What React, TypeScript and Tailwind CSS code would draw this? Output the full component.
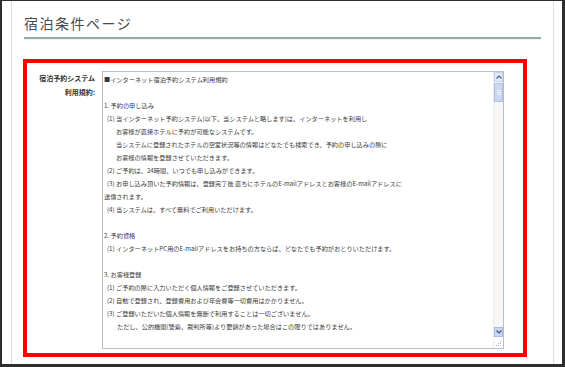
const lines: { t: string; i?: string }[] = [
  { t: "■インターネット宿泊予約システム利用規約" },
  { t: "" },
  { t: "1. 予約の申し込み" },
  { t: "(1) 当インターネット予約システム(以下、当システムと略します)は、インターネットを利用し", i: "pl-[3px]" },
  { t: "お客様が直接ホテルに予約が可能なシステムです。", i: "pl-[12px]" },
  { t: "当システムに登録されたホテルの空室状況等の情報はどなたでも検索でき、予約の申し込みの際に", i: "pl-[12px]" },
  { t: "お客様の情報を登録させていただきます。", i: "pl-[12px]" },
  { t: "(2) ご予約は、24時間、いつでも申し込みができます。", i: "pl-[3px]" },
  { t: "(3) お申し込み頂いた予約情報は、登録完了後 直ちにホテルのE-mailアドレスとお客様のE-mailアドレスに", i: "pl-[3px]" },
  { t: "送信されます。" },
  { t: "(4) 当システムは、すべて無料でご利用いただけます。", i: "pl-[3px]" },
  { t: "" },
  { t: "2. 予約資格" },
  { t: "(1) インターネットPC用のE-mailアドレスをお持ちの方ならば、どなたでも予約がおとりいただけます。", i: "pl-[3px]" },
  { t: "" },
  { t: "3. お客様登録" },
  { t: "(1) ご予約の際に入力いただく個人情報をご登録させていただきます。", i: "pl-[3px]" },
  { t: "(2) 自動で登録され、登録費用および年会費等一切費用はかかりません。", i: "pl-[3px]" },
  { t: "(3) ご登録いただいた個人情報を無断で利用することは一切ございません。", i: "pl-[3px]" },
  { t: "ただし、公的機関(警察、裁判所等)より要請があった場合はこの限りではありません。", i: "pl-[13px]" },
];

function ScrollBar() {
  return (
    <div className="w-[10px] flex flex-col bg-[#f6f6f6] border-l border-[#eeeeee]">
      <div className="h-[10px] flex items-center justify-center bg-[#e3eaf8] border border-[#c4d1ec]">
        <svg width="6" height="4" viewBox="0 0 6 4">
          <path d="M0.5 3.5 L3 1 L5.5 3.5" stroke="#4a5f8a" strokeWidth="1.2" fill="none" />
        </svg>
      </div>
      <div className="h-[19px] mt-[1px] bg-[#cad8f4] border border-[#aebfe4] flex flex-col items-center justify-center gap-[1px]">
        <div className="w-[4px] h-px bg-[#eef3fc]" />
        <div className="w-[4px] h-px bg-[#eef3fc]" />
        <div className="w-[4px] h-px bg-[#eef3fc]" />
      </div>
      <div className="flex-1" />
      <div className="h-[10px] flex items-center justify-center bg-[#c9d6f2] border border-[#a9bbe3]">
        <svg width="6" height="4" viewBox="0 0 6 4">
          <path d="M0.5 0.5 L3 3 L5.5 0.5" stroke="#3d5282" strokeWidth="1.2" fill="none" />
        </svg>
      </div>
      <div className="h-[11px] bg-white flex items-end justify-end pr-[1px] pb-[1px]">
        <svg width="6" height="6" viewBox="0 0 6 6">
          <rect x="4" y="0" width="1" height="1" fill="#b0b0b0" />
          <rect x="2" y="2" width="1" height="1" fill="#b0b0b0" />
          <rect x="4" y="2" width="1" height="1" fill="#b0b0b0" />
          <rect x="0" y="4" width="1" height="1" fill="#b0b0b0" />
          <rect x="2" y="4" width="1" height="1" fill="#b0b0b0" />
          <rect x="4" y="4" width="1" height="1" fill="#b0b0b0" />
        </svg>
      </div>
    </div>
  );
}

export default function App() {
  return (
    <div className="w-[565px] h-[367px] bg-white border-t border-l-2 border-r-[3px] border-b-[3px] border-[#2e2e2e] overflow-hidden font-['Noto_Sans_CJK_JP',sans-serif]">
      <div className="ml-[9px] w-[543px] h-full border-x border-[#dedede]">
        <div className="px-[12px] pt-[12px]">
          <h1 className="text-[14px] leading-[20px] tracking-[1.5px] text-[#4a4a4a] font-normal pb-[4px] border-b-2 border-[#93aaa7]">
            宿泊条件ページ
          </h1>
          <div className="h-px bg-[#eef3f3]" />
        </div>
        <div className="ml-[11px] mt-[19px] w-[504px] h-[298px] border-4 border-[#ff0000] pt-[8px] pl-[8px] flex gap-[7px]">
          <div className="w-[60px] text-right text-[7px] leading-[14px] font-bold text-[#333]">
            <div>宿泊予約システム</div>
            <div>利用規約:</div>
          </div>
          <div className="w-[402px] h-[278px] border border-[#b7c1ca] flex bg-white">
            <div className="flex-1 overflow-hidden pt-[1px] pl-[1px] text-[6.2px] leading-[13px] text-[#3a3a3a] whitespace-nowrap">
              {lines.map((l, k) => (
                <div key={k} className={`h-[13px] ${l.i ?? ""}`}>
                  {l.t}
                </div>
              ))}
            </div>
            <ScrollBar />
          </div>
        </div>
      </div>
    </div>
  );
}
